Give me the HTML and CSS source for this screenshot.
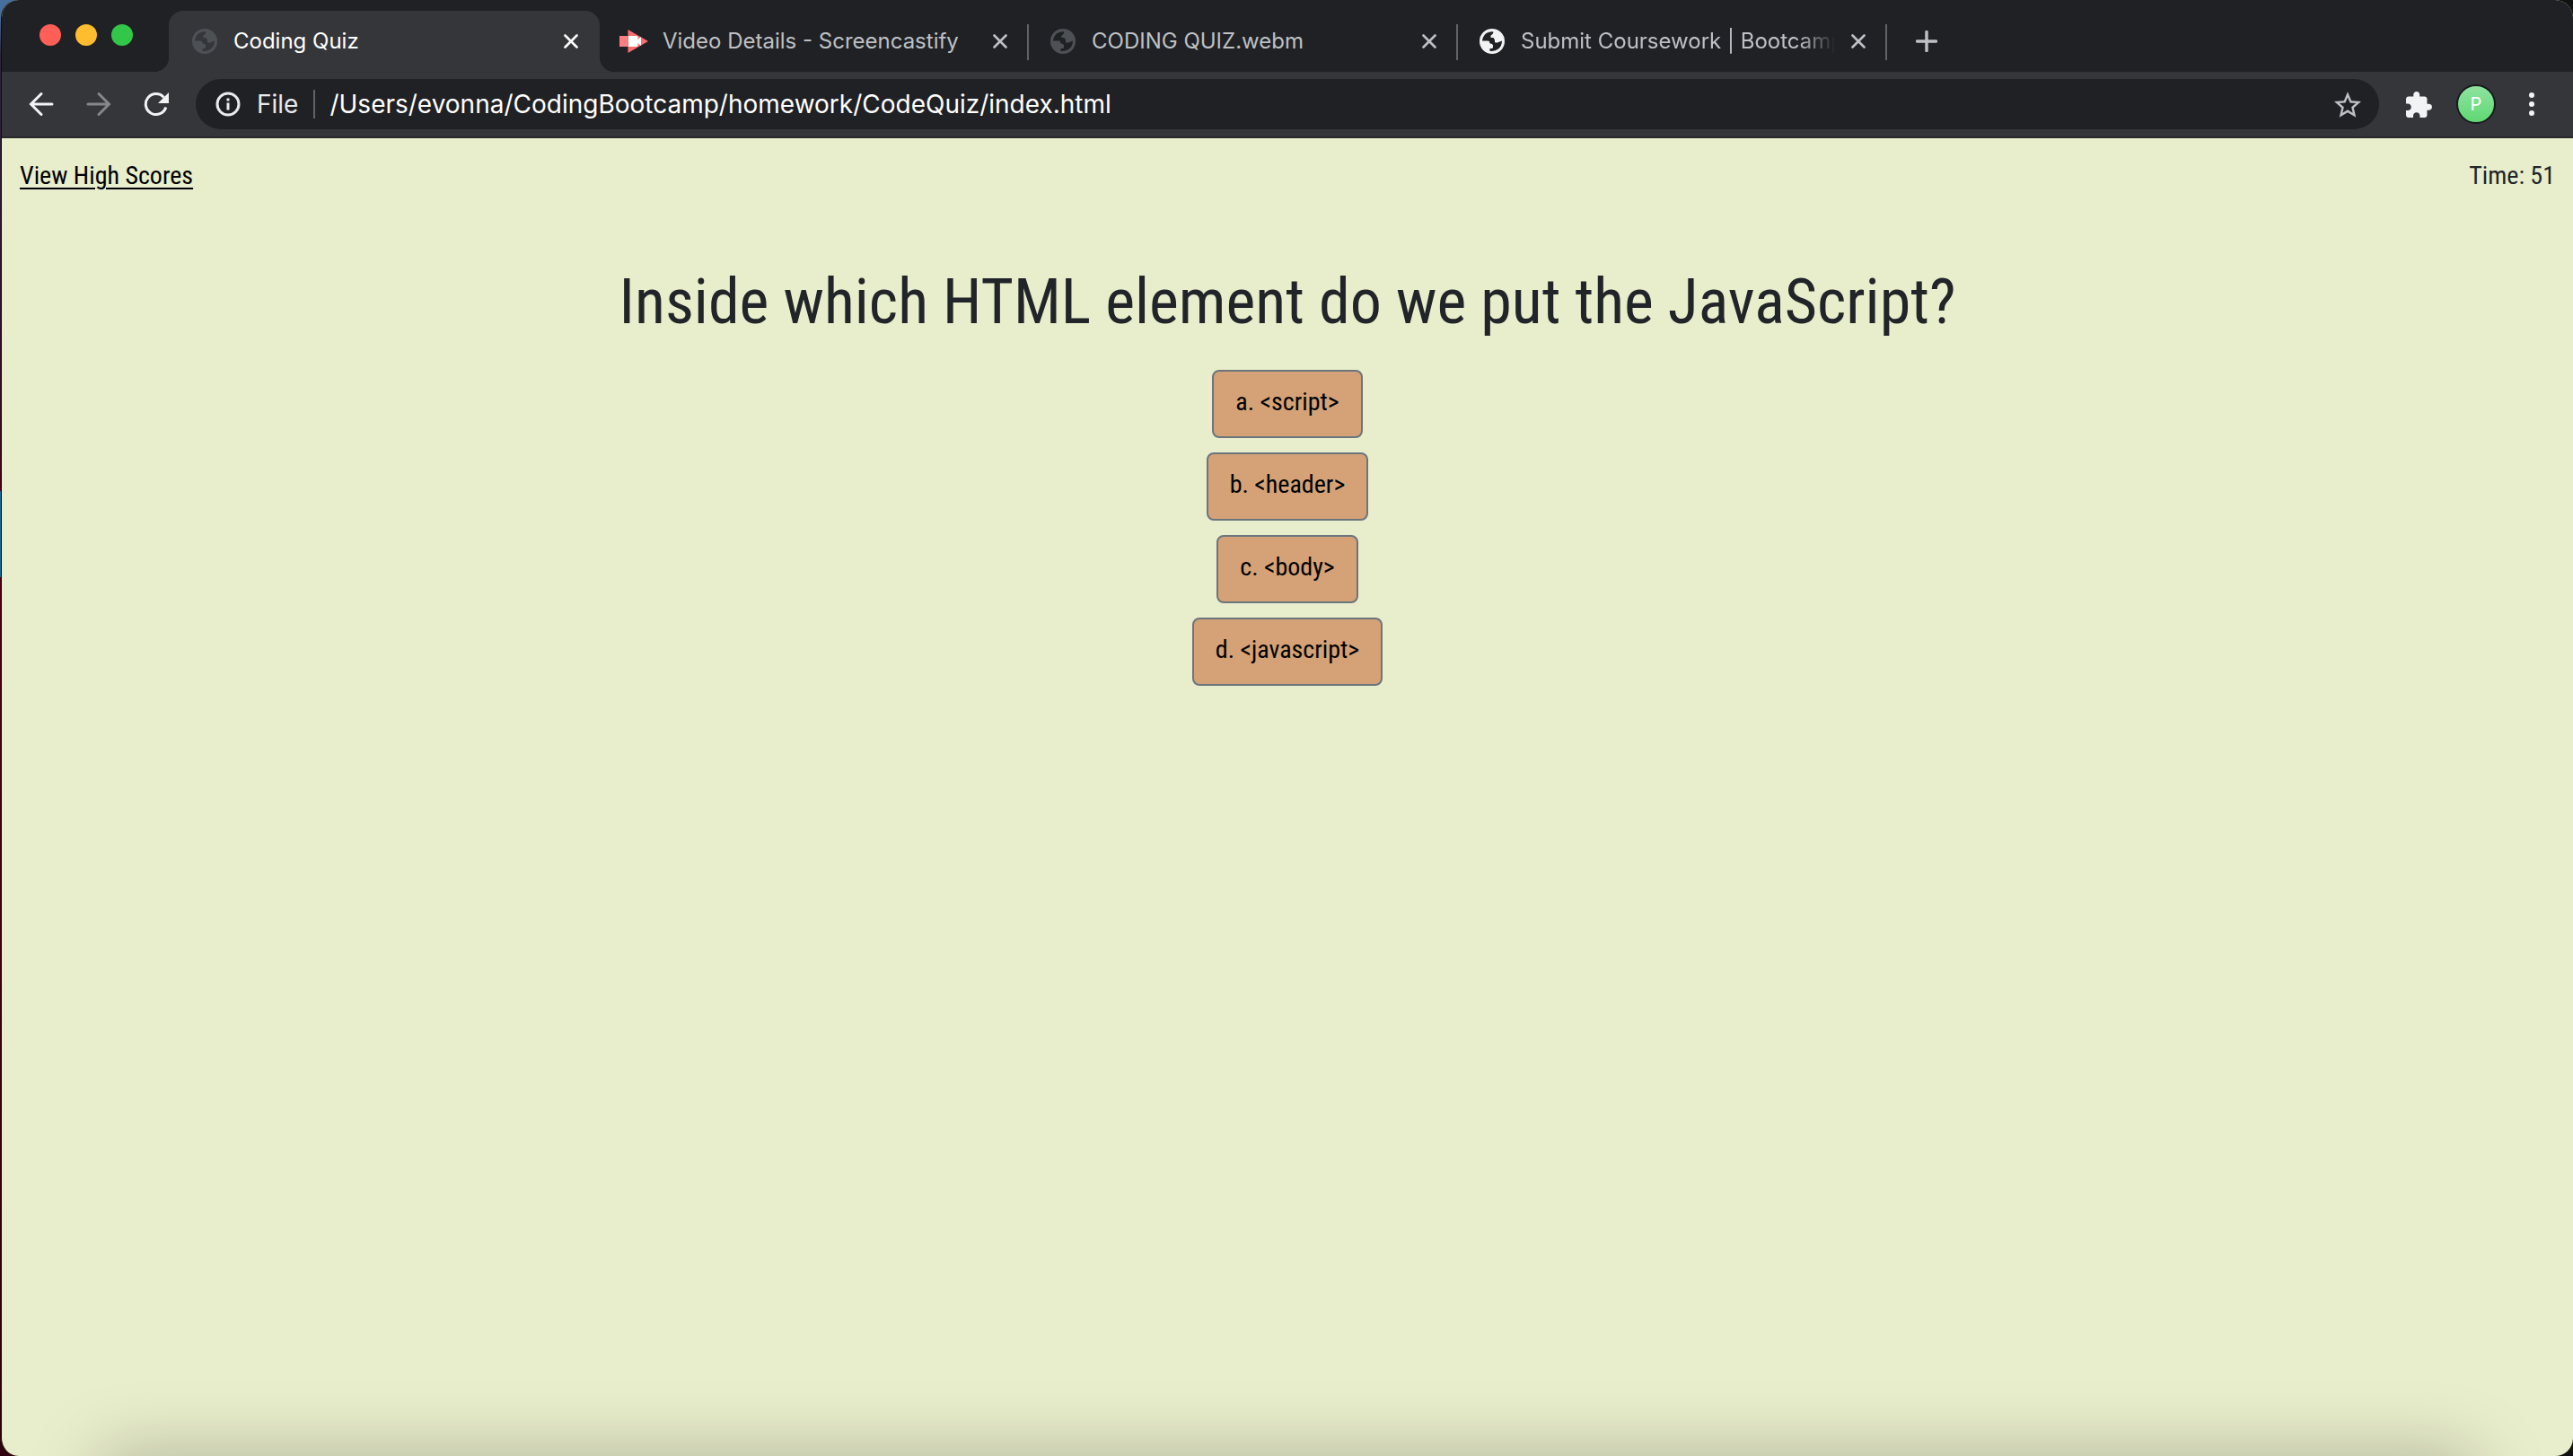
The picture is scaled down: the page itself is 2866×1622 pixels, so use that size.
FILE: index.html
```html
<!DOCTYPE html>
<html lang="en">
<head>
<meta charset="utf-8">
<title>Coding Quiz</title>
<link rel="stylesheet" href="styles.css">
</head>
<body>
<svg class="sprite" aria-hidden="true">
  <symbol id="globe" viewBox="0 0 28 28"><path fill="currentColor" fill-rule="evenodd" d="M14 0a14 14 0 1 1 0 28a14 14 0 1 1 0-28zM3 13.500Q3.500 8 7.500 5Q11 2.800 15 3.200Q16 4 14.500 6L12.500 7.500V10H15.500L17 12.500V15Q19 16 21 15L25 13.500Q25 19 21 22.500Q17 25.600 11.500 24.700V22H14Q15.500 21 15 18.500Q14.500 16.500 12 16.500Q11 16.500 11 14Q10.500 13.500 9 13.500z"/></symbol>
  <symbol id="close" viewBox="0 0 16 16"><path d="M1.500 1.500l13 13M14.500 1.500l-13 13" fill="none" stroke="currentColor" stroke-width="2.600" stroke-linecap="round"/></symbol>
</svg>
<div class="window">
  <header class="tabbar">
    <div class="lights">
      <button class="light red" aria-label="Close window"></button>
      <button class="light yellow" aria-label="Minimize window"></button>
      <button class="light green" aria-label="Zoom window"></button>
    </div>
    <div class="tabs">
      <div class="tab active">
        <svg class="favicon dim"><use href="#globe"/></svg>
        <button class="title">Coding Quiz</button>
        <button class="close" aria-label="Close tab"><svg><use href="#close"/></svg></button>
      </div>
      <div class="tab">
        <svg class="favicon" viewBox="0 0 28 28"><path fill="#fb7f81" d="M-2 8h10v12h-10z"/><path fill="#fb6d70" d="M7.500 1L30 14L7.500 27z"/><path fill="#fff" d="M8 8h9q1.500 0 1.500 1.500v2.500l3.500-3v10l-3.500-3v2.500q0 1.500-1.500 1.500h-9z"/></svg>
        <button class="title">Video Details - Screencastify</button>
        <button class="close" aria-label="Close tab"><svg><use href="#close"/></svg></button>
      </div>
      <div class="tab divided">
        <svg class="favicon dim"><use href="#globe"/></svg>
        <button class="title">CODING QUIZ.webm</button>
        <button class="close" aria-label="Close tab"><svg><use href="#close"/></svg></button>
      </div>
      <div class="tab divided">
        <svg class="favicon bright"><use href="#globe"/></svg>
        <button class="title fade">Submit Coursework | Bootcamp</button>
        <button class="close" aria-label="Close tab"><svg><use href="#close"/></svg></button>
      </div>
      <button class="newtab divided" aria-label="New tab"><svg viewBox="0 0 24 24"><path d="M12 1.500v21M1.500 12h21" stroke="currentColor" stroke-width="3.400" stroke-linecap="round"/></svg></button>
    </div>
  </header>
  <nav class="toolbar">
    <button class="tool" aria-label="Back"><svg viewBox="0 0 28 28"><path d="M26 14H3M14 2.500L2.500 14L14 25.500" fill="none" stroke="currentColor" stroke-width="3" stroke-linecap="round"/></svg></button>
    <button class="tool faded" aria-label="Forward"><svg viewBox="0 0 28 28"><path d="M2 14h23M14 2.500L25.500 14L14 25.500" fill="none" stroke="currentColor" stroke-width="3" stroke-linecap="round"/></svg></button>
    <button class="tool" aria-label="Reload"><svg viewBox="0 0 28 28"><path d="M24.800 17.500A11.500 11.500 0 1 1 22.500 6.500" fill="none" stroke="currentColor" stroke-width="3"/><path d="M28 1v12H16z" fill="currentColor"/></svg></button>
    <div class="omnibox">
      <svg class="info" viewBox="0 0 28 28"><circle cx="14" cy="14" r="12" fill="none" stroke="currentColor" stroke-width="3"/><path d="M12.500 7.500h3v3h-3zM12.500 12.500h3v8h-3z" fill="currentColor"/></svg>
      <label class="scheme" for="url">File</label>
      <input class="url" id="url" type="text" value="/Users/evonna/CodingBootcamp/homework/CodeQuiz/index.html">
      <button class="star" aria-label="Bookmark"><svg viewBox="2 2 20 19"><path fill="currentColor" d="M22 9.240l-7.190-.62L12 2 9.190 8.630 2 9.240l5.460 4.730L5.820 21 12 17.270 18.180 21l-1.630-7.030L22 9.240zM12 15.400l-3.760 2.270 1-4.280-3.320-2.880 4.380-.38L12 6.100l1.710 4.040 4.380.38-3.320 2.880 1 4.280L12 15.400z"/></svg></button>
    </div>
    <button class="ext" aria-label="Extensions"><svg viewBox="2 1 21 21"><path fill="currentColor" d="M20.500 11H19V7c0-1.100-.9-2-2-2h-4V3.500C13 2.120 11.880 1 10.500 1S8 2.120 8 3.500V5H4c-1.100 0-1.990.9-1.990 2v3.800H3.500c1.490 0 2.700 1.210 2.700 2.700s-1.210 2.700-2.700 2.700H2V20c0 1.100.9 2 2 2h3.800v-1.500c0-1.490 1.210-2.700 2.700-2.700 1.490 0 2.700 1.210 2.700 2.700V22H17c1.100 0 2-.9 2-2v-4h1.500c1.380 0 2.500-1.120 2.500-2.500S21.880 11 20.500 11z"/></svg></button>
    <button class="avatar">P</button>
    <button class="menu" aria-label="Menu"><svg viewBox="0 0 8 28"><path fill="currentColor" d="M4 1a3 3 0 1 1 0 6a3 3 0 1 1 0-6zM4 11a3 3 0 1 1 0 6a3 3 0 1 1 0-6zM4 21a3 3 0 1 1 0 6a3 3 0 1 1 0-6z"/></svg></button>
  </nav>
  <div class="page">
    <div class="status">
      <a href="#scores">View High Scores</a>
      <span>Time: 51</span>
    </div>
    <main class="quiz">
      <h1>Inside which HTML element do we put the JavaScript?</h1>
      <button class="answer">a. &lt;script&gt;</button>
      <button class="answer">b. &lt;header&gt;</button>
      <button class="answer">c. &lt;body&gt;</button>
      <button class="answer">d. &lt;javascript&gt;</button>
    </main>
  </div>
</div>
</body>
</html>
```
FILE: styles.css
```css
* { box-sizing: border-box; }
body {
  margin: 0;
  background: linear-gradient(90deg, transparent 50%, #111 50%),
    linear-gradient(#476f9c 0 20px, #2c2540 60px, #3a0a20 500px, #4b0015 547px, #1d6b96 547px 643px, #4b0015 643px, #2e000c);
  font-family: Inter, sans-serif;
}
button {
  margin: 0;
  padding: 0;
  border: 0;
  background: none;
  color: inherit;
  font: inherit;
}
svg { display: block; }
.sprite { position: absolute; width: 0; height: 0; }

.window {
  display: flex;
  flex-direction: column;
  min-height: 100vh;
  margin-left: 1px;
  border-left: 1px solid #16080c;
  border-radius: 20px;
  overflow: hidden;
  background: #e8edcb;
}

/* Tab strip */
.tabbar {
  display: flex;
  height: 80px;
  background: #202124;
  color: #bdc1c6;
}
.lights {
  display: flex;
  gap: 16px;
  flex: none;
  width: 186px;
  padding: 27px 0 0 42px;
}
.light { width: 24px; height: 24px; border-radius: 50%; }
.red { background: #ff5f57; }
.yellow { background: #febc2e; }
.green { background: #32c748; }
.tabs {
  display: flex;
  flex: 1;
  min-width: 0;
  padding-top: 12px;
}
.tab {
  position: relative;
  display: flex;
  align-items: center;
  gap: 18px;
  flex: 0 1 478px;
  min-width: 0;
  padding: 0 22px 0 26px;
}
.active {
  flex-basis: 480px;
  margin-right: -2px;
  padding-right: 24px;
  border-radius: 16px 16px 0 0;
  background: #35363a;
  color: #fff;
}
.active::before,
.active::after {
  content: "";
  position: absolute;
  bottom: 0;
  width: 16px;
  height: 16px;
}
.active::before { right: 100%; background: radial-gradient(circle at 0 0, transparent 16px, #35363a 16px); }
.active::after { left: 100%; background: radial-gradient(circle at 100% 0, transparent 16px, #35363a 16px); }
.divided::before {
  content: "";
  position: absolute;
  left: 0;
  top: 15px;
  width: 2px;
  height: 40px;
  background: #5f6368;
}
.favicon { flex: none; width: 28px; height: 28px; overflow: visible; }
.dim { color: #4d5156; }
.bright { color: #f1f3f4; }
.title {
  flex: 1;
  min-width: 0;
  overflow: hidden;
  white-space: nowrap;
  text-align: left;
  font-size: 24px;
  line-height: 32px;
}
.fade { mask-image: linear-gradient(90deg, #000 calc(100% - 40px), transparent); }
.close svg { width: 16px; height: 16px; }
.newtab {
  position: relative;
  flex: none;
  padding: 0 0 0 34px;
}
.newtab svg { width: 24px; height: 24px; }

/* Address bar */
.toolbar {
  display: flex;
  align-items: center;
  height: 74px;
  padding: 0 42px 0 30px;
  border-bottom: 2px solid #28292c;
  background: #35363a;
  color: #f1f3f4;
}
.tool { flex: none; margin-right: 36px; }
.tool svg { width: 28px; height: 28px; }
.faded { color: #86878a; }
.omnibox {
  display: flex;
  align-items: center;
  flex: 1;
  min-width: 0;
  height: 56px;
  margin-left: -6px;
  padding: 0 20px 0 22px;
  border-radius: 28px;
  background: #202124;
  color: #e8eaed;
}
.info { flex: none; width: 28px; height: 28px; }
.scheme {
  padding: 0 17px 0 18px;
  border-right: 2px solid #5f6368;
  font-size: 28px;
  line-height: 32px;
}
.url {
  flex: 1;
  min-width: 0;
  padding: 0 0 0 16px;
  border: 0;
  outline: 0;
  background: none;
  color: #fff;
  font: 28px/32px Inter, sans-serif;
}
.star { color: #bdc1c6; }
.star svg { width: 30px; height: 29px; }
.ext { margin-left: 30px; }
.ext svg { width: 29px; height: 29px; }
.avatar {
  flex: none;
  width: 44px;
  height: 44px;
  margin: 0 36px 0 27px;
  border: 2px solid #18191b;
  border-radius: 50%;
  background: linear-gradient(#8fe3a0, #5fd873);
  color: #fff;
  font-size: 20px;
  line-height: 24px;
}
.menu svg { width: 8px; height: 28px; }

/* Quiz page */
.page {
  position: relative;
  flex: 1;
  overflow: hidden;
  padding: 18px 20px;
  color: #212529;
  font-family: "Roboto Condensed", Roboto, sans-serif;
  font-size: 28px;
  line-height: 48px;
}
.page::after {
  content: "";
  position: absolute;
  left: 110px;
  right: 110px;
  top: 100%;
  height: 80px;
  box-shadow: 0 0 80px rgba(0, 0, 0, 0.25);
}
.status { display: flex; justify-content: space-between; }
.status a { color: #000; text-underline-offset: 4px; text-decoration-thickness: 2px; }
.quiz {
  display: flex;
  flex-direction: column;
  align-items: center;
  gap: 16px;
  padding-top: 68px;
}
h1 {
  margin: 0;
  padding-bottom: 12px;
  font-size: 70px;
  font-weight: 400;
  line-height: 96px;
  text-align: center;
}
.answer {
  padding: 10px 24px 14px;
  border: 2px solid #6c757d;
  border-radius: 8px;
  background: #d4a276;
  color: #000;
}
```
